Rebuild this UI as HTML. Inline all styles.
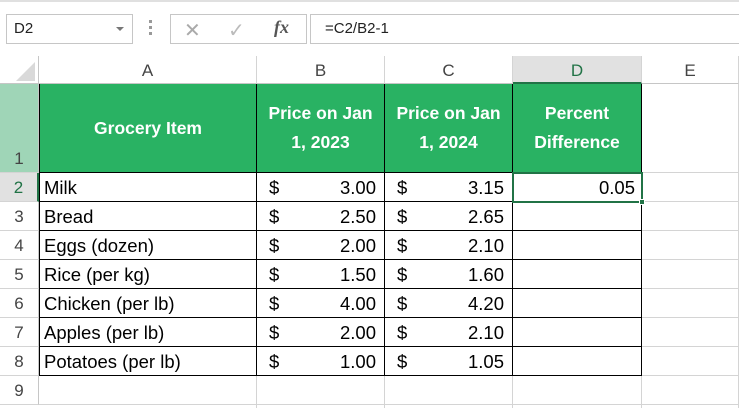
<!DOCTYPE html>
<html><head><meta charset="utf-8"><style>
*{box-sizing:border-box;margin:0;padding:0}
body{width:739px;height:408px;overflow:hidden;background:#fff;font-family:"Liberation Sans",sans-serif;position:relative}
.a{position:absolute}
.ch{position:absolute;top:56px;height:28px;border-right:1px solid #d4d4d4;border-bottom:1px solid #c6c6c6;text-align:center;font-size:17px;line-height:30px;color:#444;background:#fff}
.rh{position:absolute;left:0;width:39px;height:29px;border-bottom:1px solid #d4d4d4;border-right:1px solid #c6c6c6;text-align:center;font-size:17px;line-height:30px;color:#444;background:#fff}
.c{position:absolute;height:29px;font-size:18.5px;line-height:29px;color:#000;border-right:1px solid #000;border-bottom:1px solid #000;white-space:nowrap}
.g{position:absolute;top:84px;height:89px;background:#29b263;color:#fff;font-weight:bold;font-size:17.5px;text-align:center;border-right:1px solid #000;border-bottom:1px solid #000;display:flex;align-items:center;justify-content:center;line-height:29px}
.vl{position:absolute;width:1px;background:#d4d4d4}
.hl{position:absolute;height:1px;background:#d4d4d4}
.m{padding:0 8px 0 12px;display:flex;justify-content:space-between}
</style></head><body>
<div class="a" style="left:0;top:0;width:739px;height:56px;background:#fff;border-top:2px solid #e0e0e0"></div>
<div class="a" style="left:6px;top:14px;width:127px;height:30px;border:1px solid #c6c6c6;font-size:15px;line-height:28px;padding-left:7px;color:#222">D2</div>
<div class="a" style="left:116px;top:27px;width:0;height:0;border-left:4px solid transparent;border-right:4px solid transparent;border-top:4px solid #777"></div>
<div class="a" style="left:149px;top:20px;width:3px;height:3px;background:#999;box-shadow:0 6px 0 #999,0 12px 0 #999"></div>
<div class="a" style="left:170px;top:14px;width:137px;height:30px;border:1px solid #c6c6c6"></div>
<div class="a" style="left:184px;top:18px;font-size:20px;color:#aaa">✕</div>
<div class="a" style="left:228px;top:18px;font-size:20px;color:#bbb">✓</div>
<div class="a" style="left:274px;top:17px;font-size:18px;color:#555;font-family:'Liberation Serif',serif;font-style:italic;font-weight:bold">fx</div>
<div class="a" style="left:310px;top:14px;width:440px;height:30px;border:1px solid #c6c6c6;font-size:15px;line-height:28px;padding-left:14px;color:#222">=C2/B2-1</div>
<div class="a" style="left:0;top:56px;width:39px;height:28px;border-right:1px solid #c6c6c6;border-bottom:1px solid #c6c6c6"></div>
<div class="a" style="left:16px;top:62px;width:0;height:0;border-left:19px solid transparent;border-bottom:19px solid #d9d9d9"></div>
<div class="ch" style="left:39px;width:218px">A</div>
<div class="ch" style="left:257px;width:128px">B</div>
<div class="ch" style="left:385px;width:128px">C</div>
<div class="ch" style="left:513px;width:129px;background:#e1e1e1;border-bottom:2px solid #217346;color:#217346">D</div>
<div class="ch" style="left:642px;width:97px">E</div>
<div class="rh" style="top:84px;height:89px;background:#9fd5b7;line-height:150px">1</div>
<div class="rh" style="top:173px;background:#e1e1e1;color:#217346;border-right:2px solid #217346">2</div>
<div class="rh" style="top:202px">3</div>
<div class="rh" style="top:231px">4</div>
<div class="rh" style="top:260px">5</div>
<div class="rh" style="top:289px">6</div>
<div class="rh" style="top:318px">7</div>
<div class="rh" style="top:347px">8</div>
<div class="rh" style="top:376px">9</div>
<div class="hl" style="left:642px;top:172px;width:97px"></div>
<div class="hl" style="left:642px;top:201px;width:97px"></div>
<div class="hl" style="left:642px;top:230px;width:97px"></div>
<div class="hl" style="left:642px;top:259px;width:97px"></div>
<div class="hl" style="left:642px;top:288px;width:97px"></div>
<div class="hl" style="left:642px;top:317px;width:97px"></div>
<div class="hl" style="left:642px;top:346px;width:97px"></div>
<div class="hl" style="left:642px;top:375px;width:97px"></div>
<div class="hl" style="left:39px;top:404px;width:700px"></div>
<div class="vl" style="left:256px;top:376px;height:32px"></div>
<div class="vl" style="left:384px;top:376px;height:32px"></div>
<div class="vl" style="left:512px;top:376px;height:32px"></div>
<div class="vl" style="left:641px;top:376px;height:32px"></div>
<div class="vl" style="left:738px;top:84px;height:324px"></div>
<div class="g" style="left:39px;width:218px;border-left:1px solid #000">Grocery Item</div>
<div class="g" style="left:257px;width:128px">Price on Jan<br>1, 2023</div>
<div class="g" style="left:385px;width:128px">Price on Jan<br>1, 2024</div>
<div class="g" style="left:513px;width:129px">Percent<br>Difference</div>
<div class="c" style="left:39px;top:173px;width:218px;padding-left:4px;border-left:1px solid #000">Milk</div>
<div class="c" style="left:39px;top:202px;width:218px;padding-left:4px;border-left:1px solid #000">Bread</div>
<div class="c" style="left:39px;top:231px;width:218px;padding-left:4px;border-left:1px solid #000">Eggs (dozen)</div>
<div class="c" style="left:39px;top:260px;width:218px;padding-left:4px;border-left:1px solid #000">Rice (per kg)</div>
<div class="c" style="left:39px;top:289px;width:218px;padding-left:4px;border-left:1px solid #000">Chicken (per lb)</div>
<div class="c" style="left:39px;top:318px;width:218px;padding-left:4px;border-left:1px solid #000">Apples (per lb)</div>
<div class="c" style="left:39px;top:347px;width:218px;padding-left:4px;border-left:1px solid #000">Potatoes (per lb)</div>
<div class="c m" style="left:257px;top:173px;width:128px"><span>$</span><span>3.00</span></div>
<div class="c m" style="left:257px;top:202px;width:128px"><span>$</span><span>2.50</span></div>
<div class="c m" style="left:257px;top:231px;width:128px"><span>$</span><span>2.00</span></div>
<div class="c m" style="left:257px;top:260px;width:128px"><span>$</span><span>1.50</span></div>
<div class="c m" style="left:257px;top:289px;width:128px"><span>$</span><span>4.00</span></div>
<div class="c m" style="left:257px;top:318px;width:128px"><span>$</span><span>2.00</span></div>
<div class="c m" style="left:257px;top:347px;width:128px"><span>$</span><span>1.00</span></div>
<div class="c m" style="left:385px;top:173px;width:128px"><span>$</span><span>3.15</span></div>
<div class="c m" style="left:385px;top:202px;width:128px"><span>$</span><span>2.65</span></div>
<div class="c m" style="left:385px;top:231px;width:128px"><span>$</span><span>2.10</span></div>
<div class="c m" style="left:385px;top:260px;width:128px"><span>$</span><span>1.60</span></div>
<div class="c m" style="left:385px;top:289px;width:128px"><span>$</span><span>4.20</span></div>
<div class="c m" style="left:385px;top:318px;width:128px"><span>$</span><span>2.10</span></div>
<div class="c m" style="left:385px;top:347px;width:128px"><span>$</span><span>1.05</span></div>
<div class="c" style="left:513px;top:173px;width:129px"></div>
<div class="c" style="left:513px;top:202px;width:129px"></div>
<div class="c" style="left:513px;top:231px;width:129px"></div>
<div class="c" style="left:513px;top:260px;width:129px"></div>
<div class="c" style="left:513px;top:289px;width:129px"></div>
<div class="c" style="left:513px;top:318px;width:129px"></div>
<div class="c" style="left:513px;top:347px;width:129px"></div>
<div class="a" style="left:512px;top:172px;width:131px;height:31px;border:2px solid #217346;font-size:18.5px;line-height:27px;text-align:right;padding-right:6px;background:#fff">0.05</div>
<div class="a" style="left:639px;top:199px;width:6px;height:6px;background:#217346;border:1px solid #fff"></div>
</body></html>
